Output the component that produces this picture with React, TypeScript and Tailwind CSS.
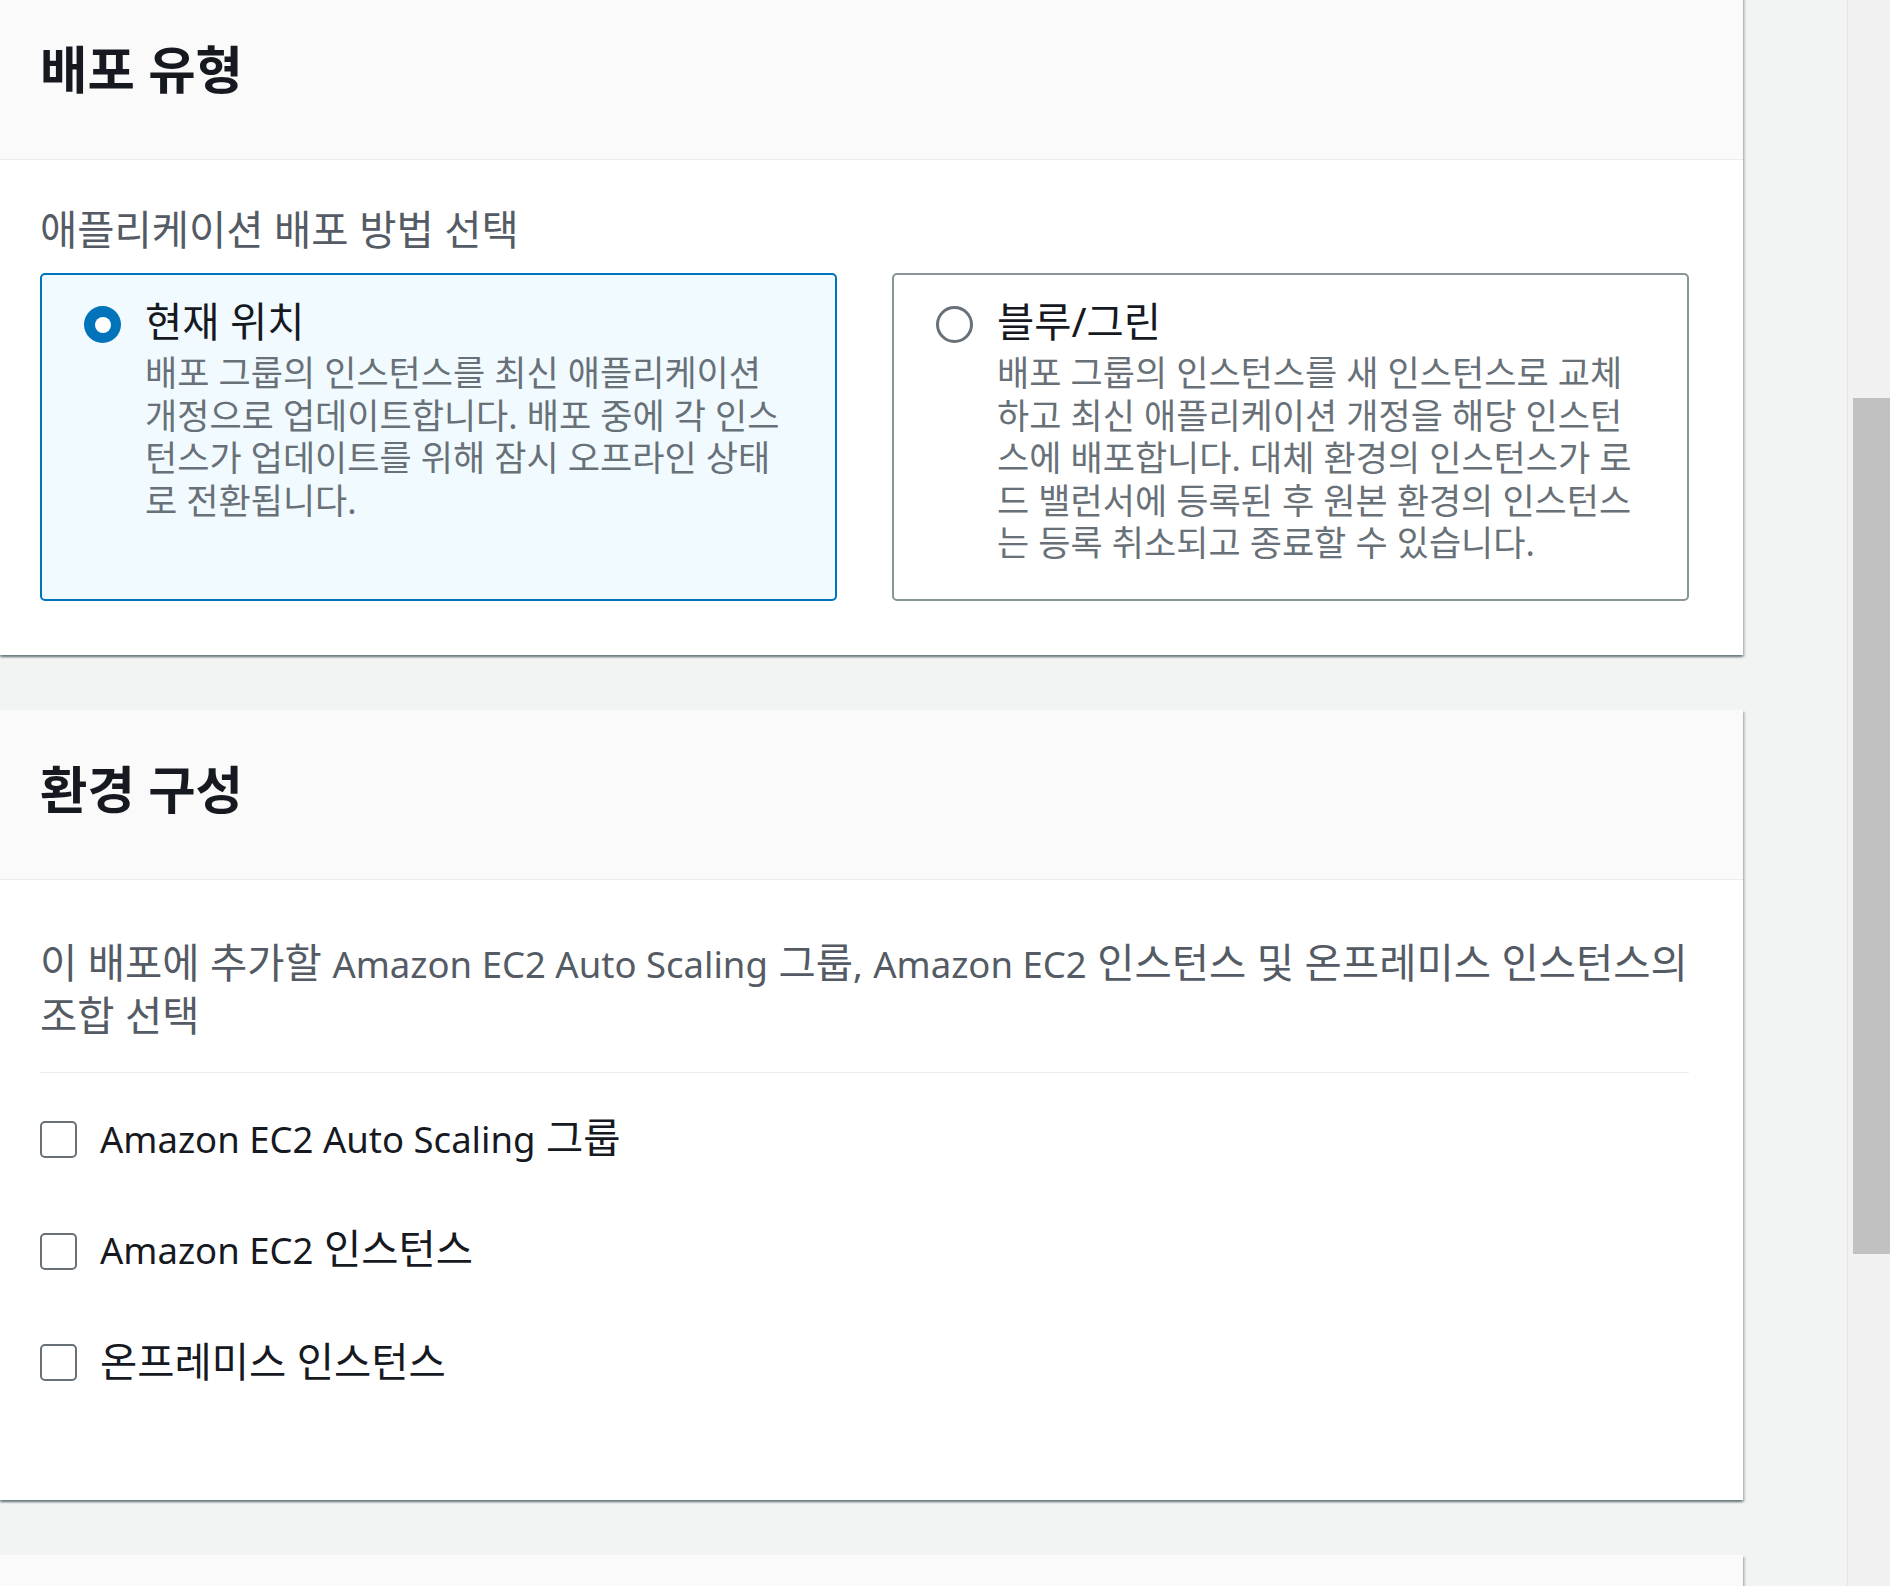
import type { ReactNode } from "react";

const panelShadow =
  "shadow-[0_2px_2px_0_rgba(0,28,36,0.35),2px_2px_2px_0_rgba(0,28,36,0.18),-2px_2px_2px_0_rgba(0,28,36,0.18)]";

// Latin runs are set a little smaller than the hangul around them
function En({ children }: { children: ReactNode }) {
  return <span className="text-[36.5px]">{children}</span>;
}

function Panel({ title, children }: { title?: string; children?: ReactNode }) {
  return (
    <section className={`shrink-0 bg-white ${panelShadow}`}>
      <header className="border-b border-[#eaeded] bg-[#fafafa] pl-[40px] pr-[54px] pt-[50px] pb-[61px]">
        <h2 className="h-[58px] text-[51.5px] font-bold leading-[58px] text-[#16191f]">
          {title}
        </h2>
      </header>
      {children}
    </section>
  );
}

function RadioTile({
  checked,
  title,
  description,
}: {
  checked?: boolean;
  title: string;
  description: string;
}) {
  return (
    <div
      className={
        checked
          ? "flex gap-[24px] rounded-[5px] border-2 border-[#0073bb] bg-[#f1faff] pl-[42px] pr-[50px] pt-[22px] pb-[34px]"
          : "flex gap-[24px] rounded-[5px] border-2 border-[#879596] bg-white pl-[42px] pr-[50px] pt-[22px] pb-[34px]"
      }
    >
      {checked ? (
        <span className="mt-[9px] flex h-[37px] w-[37px] shrink-0 items-center justify-center rounded-full bg-[#0073bb]">
          <span className="h-[16px] w-[16px] rounded-full bg-white" />
        </span>
      ) : (
        <span className="mt-[9px] h-[37px] w-[37px] shrink-0 rounded-full border-[3px] border-[#687078] bg-white" />
      )}
      <div className="min-w-0 flex-1">
        <div className="text-[40.5px] leading-[50px] text-[#16191f]">{title}</div>
        <p className="mt-[5px] text-[35px] leading-[42.5px] text-[#687078]">
          {description}
        </p>
      </div>
    </div>
  );
}

function CheckRow({ children }: { children: ReactNode }) {
  return (
    <label className="flex h-[51px] items-center gap-[23px]">
      <span className="mt-[3px] h-[37px] w-[37px] shrink-0 rounded-[5px] border-2 border-[#687078] bg-white" />
      <span className="text-[40.5px] leading-[51px] text-[#16191f]">{children}</span>
    </label>
  );
}

export default function App() {
  return (
    <div className="flex h-[1586px] w-[1890px] overflow-hidden bg-[#f2f3f3] font-['Noto_Sans','Noto_Sans_CJK_KR',sans-serif]">
      <main className="-mt-[10px] flex w-[1743px] shrink-0 flex-col gap-[55px]">
        {/* 배포 유형 */}
        <Panel title="배포 유형">
          <div className="pl-[40px] pr-[54px] pt-[44px] pb-[54px]">
            <div className="text-[40.5px] leading-[51px] text-[#545b64]">
              애플리케이션 배포 방법 선택
            </div>
            <div className="mt-[18px] grid grid-cols-2 gap-[55px]">
              <RadioTile
                checked
                title="현재 위치"
                description="배포 그룹의 인스턴스를 최신 애플리케이션 개정으로 업데이트합니다. 배포 중에 각 인스턴스가 업데이트를 위해 잠시 오프라인 상태로 전환됩니다."
              />
              <RadioTile
                title="블루/그린"
                description="배포 그룹의 인스턴스를 새 인스턴스로 교체하고 최신 애플리케이션 개정을 해당 인스턴스에 배포합니다. 대체 환경의 인스턴스가 로드 밸런서에 등록된 후 원본 환경의 인스턴스는 등록 취소되고 종료할 수 있습니다."
              />
            </div>
          </div>
        </Panel>

        {/* 환경 구성 */}
        <Panel title="환경 구성">
          <div className="pl-[40px] pr-[54px] pt-[57px] pb-[113px]">
            <p className="text-[40.5px] leading-[51px] text-[#545b64]">
              이 배포에 추가할 <En>Amazon EC2 Auto Scaling</En> 그룹
              <En>,</En> <En>Amazon EC2</En> 인스턴스 및 온프레미스 인스턴스의
              <br />
              조합 선택
            </p>
            <div className="mt-[31px] border-t border-[#eaeded]" />
            <div className="mt-[40px] flex flex-col gap-[60.5px]">
              <CheckRow>
                <En>Amazon EC2 Auto Scaling</En> 그룹
              </CheckRow>
              <CheckRow>
                <En>Amazon EC2</En> 인스턴스
              </CheckRow>
              <CheckRow>온프레미스 인스턴스</CheckRow>
            </div>
          </div>
        </Panel>

        <Panel />
      </main>

      <div className="flex-1" />

      {/* scrollbar */}
      <div className="flex w-[43px] shrink-0 flex-col border-l border-[#e6e6e6] bg-[#f1f1f1] pl-[5px]">
        <div className="mt-[398px] h-[856px] bg-[#c1c1c1]" />
      </div>
    </div>
  );
}
